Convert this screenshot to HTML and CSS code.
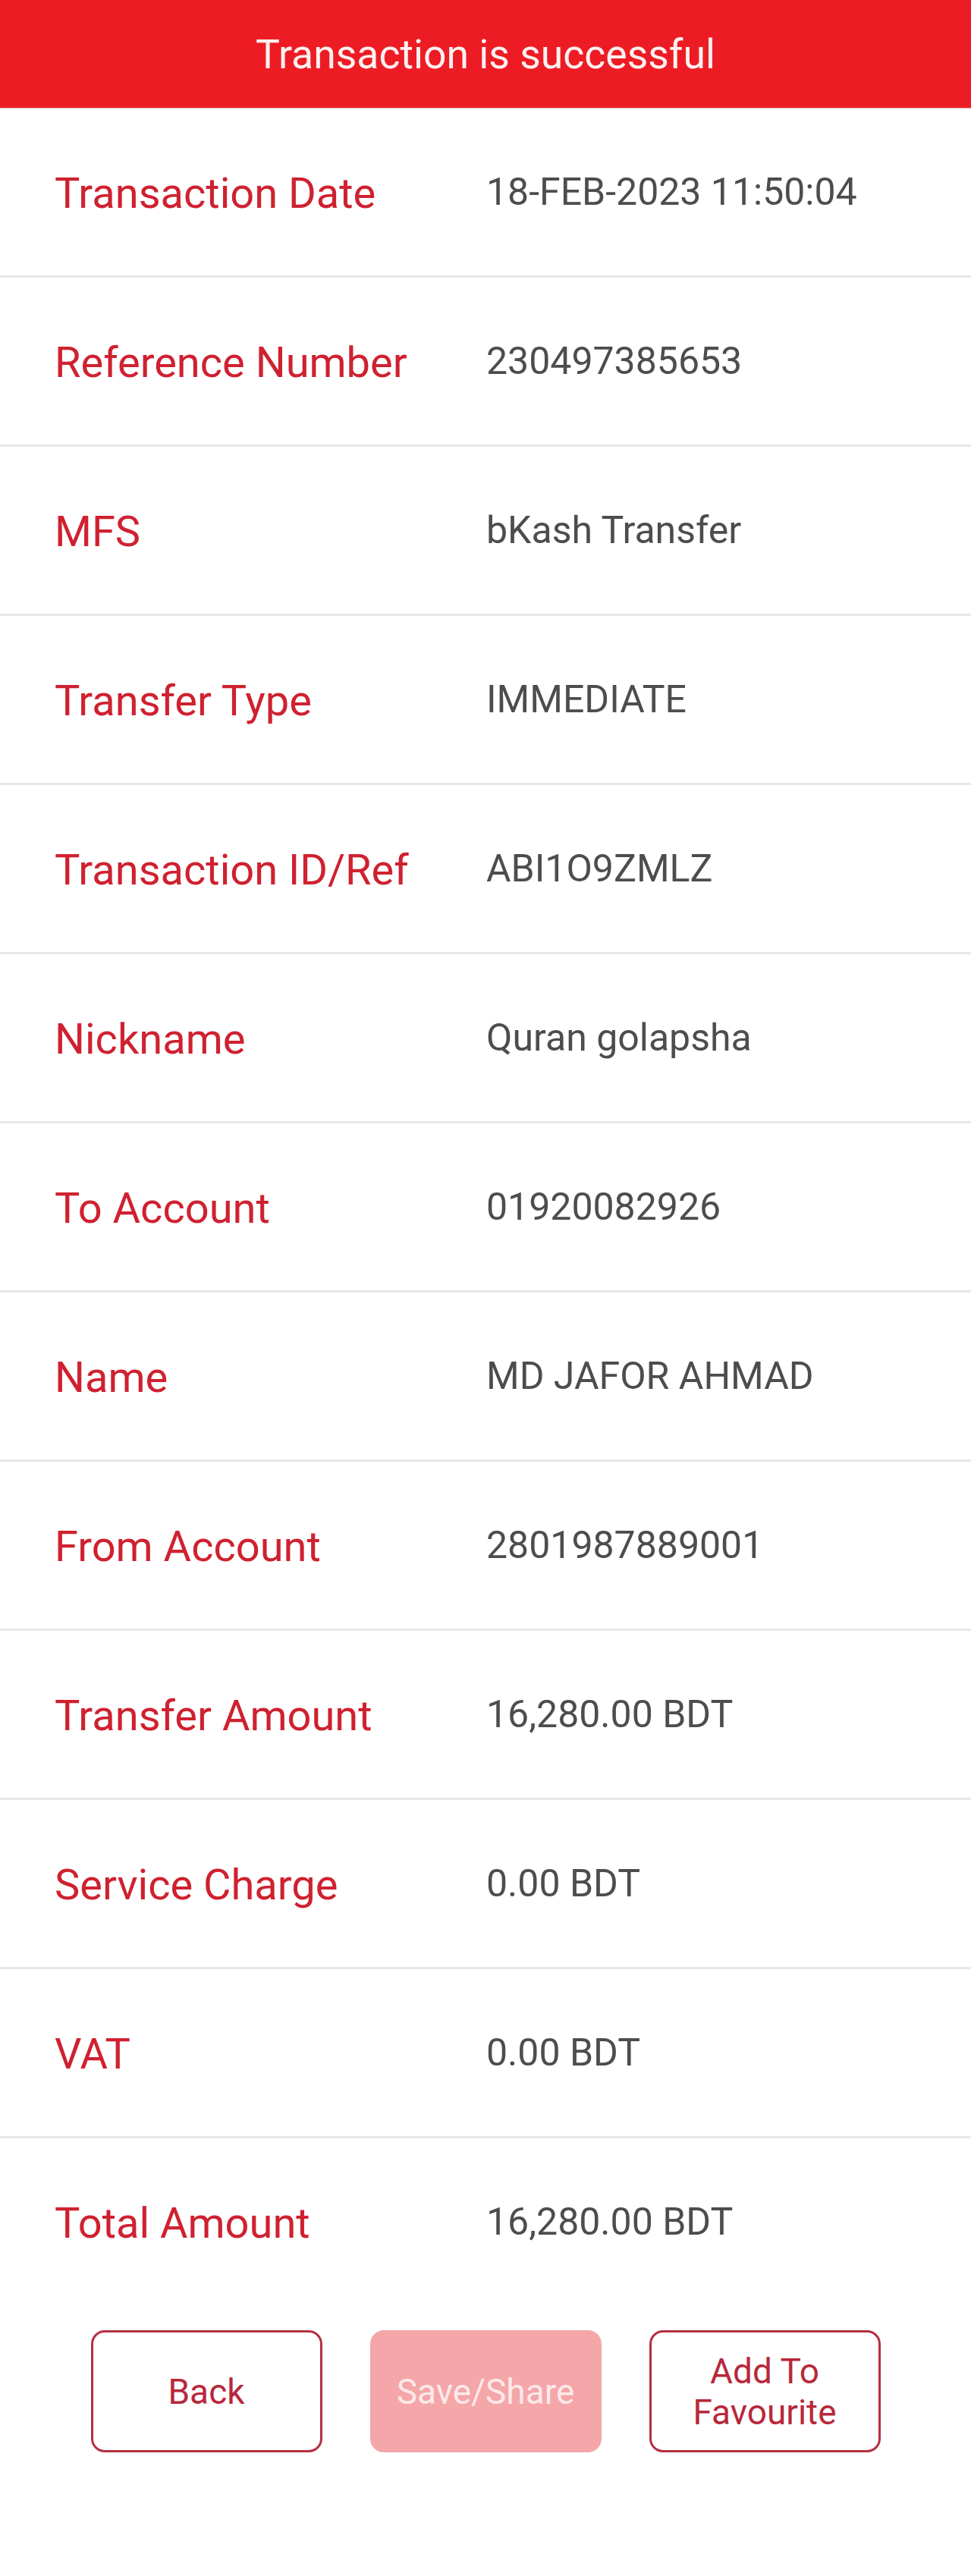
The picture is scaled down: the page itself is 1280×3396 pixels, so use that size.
FILE: index.html
```html
<!DOCTYPE html>
<html lang="en">
<head>
<meta charset="utf-8">
<title>Transaction is successful</title>
<link rel="stylesheet" href="styles.css">
</head>
<body>
<header class="topbar">Transaction is successful</header>
<main class="details">
  <div class="row"><span class="label">Transaction Date</span><span class="value">18-FEB-2023 11:50:04</span></div>
  <div class="row"><span class="label">Reference Number</span><span class="value">230497385653</span></div>
  <div class="row"><span class="label">MFS</span><span class="value">bKash Transfer</span></div>
  <div class="row"><span class="label">Transfer Type</span><span class="value">IMMEDIATE</span></div>
  <div class="row"><span class="label">Transaction ID/Ref</span><span class="value">ABI1O9ZMLZ</span></div>
  <div class="row"><span class="label">Nickname</span><span class="value">Quran golapsha</span></div>
  <div class="row"><span class="label">To Account</span><span class="value">01920082926</span></div>
  <div class="row"><span class="label">Name</span><span class="value">MD JAFOR AHMAD</span></div>
  <div class="row"><span class="label">From Account</span><span class="value">2801987889001</span></div>
  <div class="row"><span class="label">Transfer Amount</span><span class="value">16,280.00 BDT</span></div>
  <div class="row"><span class="label">Service Charge</span><span class="value">0.00 BDT</span></div>
  <div class="row"><span class="label">VAT</span><span class="value">0.00 BDT</span></div>
  <div class="row last"><span class="label">Total Amount</span><span class="value">16,280.00 BDT</span></div>
</main>
<div class="actions">
  <button class="btn outline">Back</button>
  <button class="btn disabled">Save/Share</button>
  <button class="btn outline">Add To<br>Favourite</button>
</div>
</body>
</html>
```
FILE: styles.css
```css
html, body {
  margin: 0;
  padding: 0;
  background: #ffffff;
}
body {
  font-family: Roboto, "Noto Sans", "Liberation Sans", sans-serif;
  width: 1280px;
}
.topbar {
  height: 143px;
  background: #ed1c24;
  color: #fdf1f1;
  font-size: 53.5px;
  display: flex;
  align-items: center;
  justify-content: center;
  border-bottom: 1px solid #d9a0a3;
  box-sizing: border-box;
}
.details {
  display: flex;
  flex-direction: column;
}
.row {
  height: 223px;
  box-sizing: border-box;
  border-bottom: 3px solid #e7e7e7;
  display: grid;
  grid-template-columns: 569px 1fr;
  align-items: center;
  padding-left: 72px;
}
.row.last {
  border-bottom: none;
  height: 220px;
}
.label {
  color: #cf2130;
  font-size: 56px;
  padding-top: 3px;
}
.value {
  color: #4d4d4d;
  font-size: 50px;
}
.actions {
  display: flex;
  justify-content: center;
  gap: 63px;
  margin-top: 33px;
}
.btn {
  width: 305px;
  height: 161px;
  border-radius: 18px;
  font-family: Roboto, "Noto Sans", "Liberation Sans", sans-serif;
  font-size: 46px;
  line-height: 54px;
  box-sizing: border-box;
  padding: 0;
}
.btn.outline {
  background: #ffffff;
  border: 3px solid #b53041;
  color: #b8283a;
}
.btn.disabled {
  background: #f4a6a9;
  border: none;
  color: #fde9e9;
}
```
